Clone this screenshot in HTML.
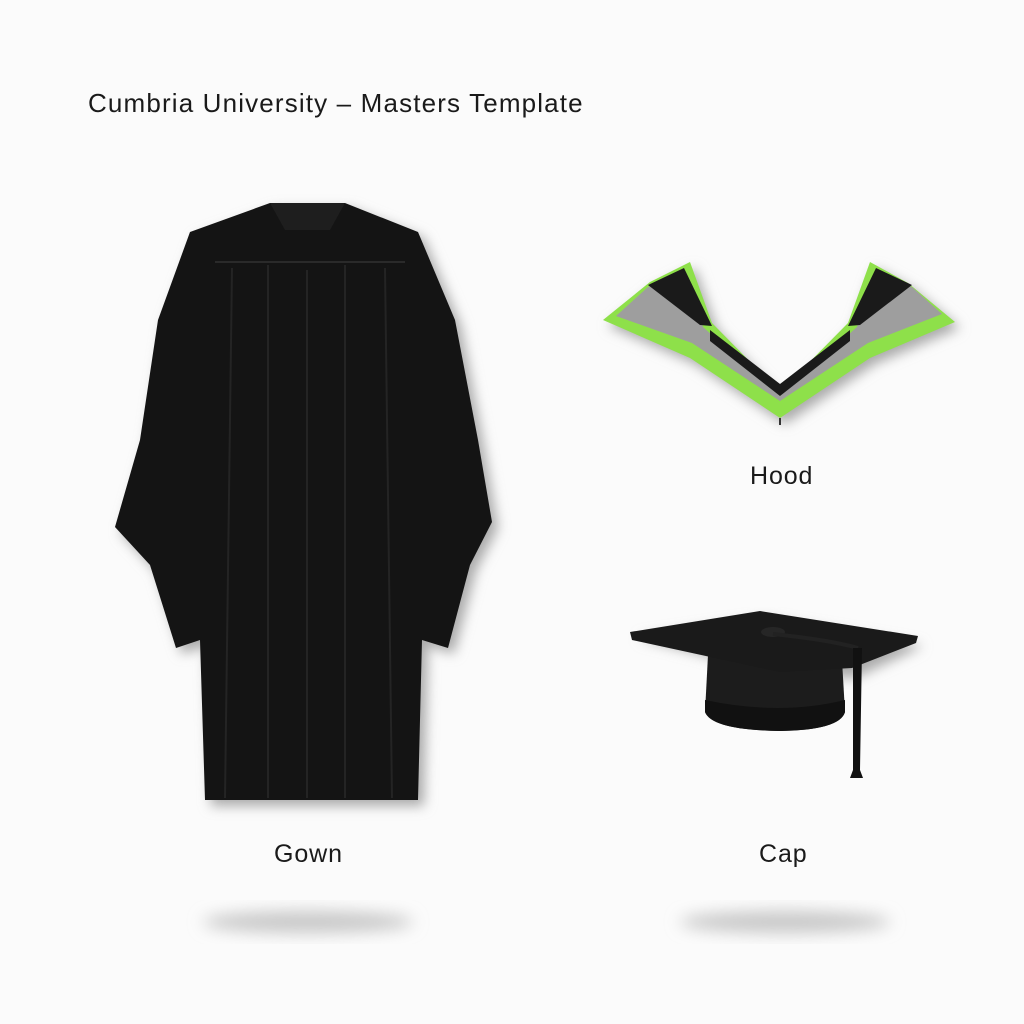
<!DOCTYPE html>
<html><head><style>
html,body{margin:0;padding:0;background:#fbfbfb;}
body{width:1024px;height:1024px;position:relative;overflow:hidden;font-family:"Liberation Sans",sans-serif;color:#1a1a1a;}
.t{position:absolute;font-size:25px;white-space:nowrap;letter-spacing:0.9px;}
</style></head><body>
<div class="t" style="left:88px;top:88px;font-size:26px;letter-spacing:1.15px;">Cumbria University – Masters Template</div>
<div class="t" style="left:750px;top:462px;">Hood</div>
<div class="t" style="left:274px;top:840px;">Gown</div>
<div class="t" style="left:759px;top:840px;">Cap</div>
<svg width="1024" height="1024" style="position:absolute;left:0;top:0">
<defs>
<filter id="b" x="-50%" y="-50%" width="200%" height="200%"><feGaussianBlur stdDeviation="8"/></filter>
<filter id="s" x="-20%" y="-20%" width="140%" height="140%"><feGaussianBlur stdDeviation="6"/></filter>
</defs>
<ellipse cx="308" cy="922" rx="105" ry="11" fill="#c8c8c8" filter="url(#b)"/>
<ellipse cx="785" cy="922" rx="105" ry="11" fill="#c8c8c8" filter="url(#b)"/>
<!-- gown -->
<path d="M270,203 L345,203 L418,232 L455,320 L478,440 L492,522 L470,565 L448,648 L422,640 L418,800 L205,800 L200,640 L176,648 L150,565 L115,527 L140,440 L158,320 L190,232 Z" fill="#aaa" filter="url(#s)" transform="translate(6,6)"/>
<path d="M270,203 L345,203 L418,232 L455,320 L478,440 L492,522 L470,565 L448,648 L422,640 L418,800 L205,800 L200,640 L176,648 L150,565 L115,527 L140,440 L158,320 L190,232 Z" fill="#141414"/>
<path d="M270,203 L345,203 L330,230 L285,230 Z" fill="#1e1e1e"/>
<path d="M215,262 L405,262" stroke="#2a2a2a" stroke-width="2"/>
<path d="M307,270 L307,798 M268,265 L268,798 M345,265 L345,798 M232,268 L225,798 M385,268 L392,798" stroke="#242424" stroke-width="2" fill="none"/>
<!-- hood -->
<path d="M603,320 L650,282 L690,262 L712,323 L780,395 L848,323 L870,262 L908,283 L955,322 L870,358 L780,418 L690,358 Z" fill="#aaa" filter="url(#s)" transform="translate(5,6)"/>
<path d="M603,320 L650,282 L690,262 L712,323 L780,392 L848,323 L870,262 L908,283 L955,322 L870,358 L780,418 L690,358 Z" fill="#8ee04a"/>
<path d="M616,316 L648,287 L686,274 L703,327 L780,396 L857,327 L874,274 L912,287 L942,314 L868,343 L780,401 L692,343 Z" fill="#9e9e9e"/>
<path d="M648,285 L684,268 L712,326 L700,325 Z M912,285 L876,268 L848,326 L860,325 Z" fill="#1a1a1a"/>
<path d="M710,330 L780,384 L850,330 L850,341 L780,396 L710,341 Z" fill="#1a1a1a"/>
<path d="M780,418 L780,425" stroke="#333" stroke-width="2"/>
<!-- cap -->
<path d="M633,630 L760,611 L918,638 L850,670 L780,668 Z" fill="#aaa" filter="url(#s)" transform="translate(5,8)"/>
<path d="M708,655 L842,660 L845,712 Q840,730 780,731 Q712,730 705,712 Z" fill="#1c1c1c"/>
<path d="M705,700 Q780,716 845,700 L845,712 Q840,730 780,731 Q712,730 705,712 Z" fill="#111"/>
<path d="M630,632 L760,611 L918,636 L916,643 L852,668 L780,672 L632,640 Z" fill="#1a1a1a"/>
<ellipse cx="773" cy="632" rx="12" ry="5" fill="#262626"/>
<path d="M773,634 Q830,640 858,648" stroke="#222" stroke-width="4" fill="none"/>
<path d="M853,648 L862,648 L860,770 L863,778 L850,778 L853,770 Z" fill="#111"/>
</svg>
</body></html>
